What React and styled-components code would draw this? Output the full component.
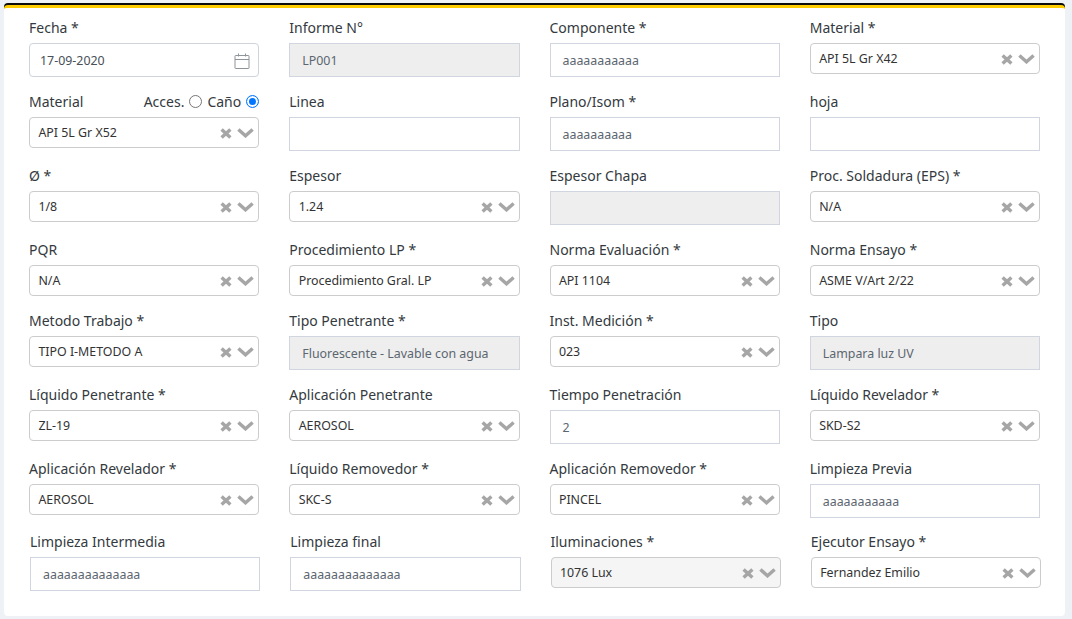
import styled, { createGlobalStyle } from "styled-components";

const GlobalStyle = createGlobalStyle`
  html, body {
    margin: 0;
    background: #eef1f6;
    font-family: "Noto Sans", "Open Sans", sans-serif;
  }
`;

const rows = [
  [
    { label: "Fecha *", type: "date", value: "17-09-2020" },
    { label: "Informe N°", type: "disabled", value: "LP001" },
    { label: "Componente *", type: "input", value: "aaaaaaaaaaa" },
    { label: "Material *", type: "select", value: "API 5L Gr X42" },
  ],
  [
    { label: "Material", type: "select", value: "API 5L Gr X52", radios: true },
    { label: "Linea", type: "input", value: "" },
    { label: "Plano/Isom *", type: "input", value: "aaaaaaaaaa" },
    { label: "hoja", type: "input", value: "" },
  ],
  [
    { label: "Ø *", type: "select", value: "1/8" },
    { label: "Espesor", type: "select", value: "1.24" },
    { label: "Espesor Chapa", type: "disabled", value: "" },
    { label: "Proc. Soldadura (EPS) *", type: "select", value: "N/A" },
  ],
  [
    { label: "PQR", type: "select", value: "N/A" },
    { label: "Procedimiento LP *", type: "select", value: "Procedimiento Gral. LP" },
    { label: "Norma Evaluación *", type: "select", value: "API 1104" },
    { label: "Norma Ensayo *", type: "select", value: "ASME V/Art 2/22" },
  ],
  [
    { label: "Metodo Trabajo *", type: "select", value: "TIPO I-METODO A" },
    { label: "Tipo Penetrante *", type: "disabled", value: "Fluorescente - Lavable con agua" },
    { label: "Inst. Medición *", type: "select", value: "023" },
    { label: "Tipo", type: "disabled", value: "Lampara luz UV" },
  ],
  [
    { label: "Líquido Penetrante *", type: "select", value: "ZL-19" },
    { label: "Aplicación Penetrante", type: "select", value: "AEROSOL" },
    { label: "Tiempo Penetración", type: "input", value: "2" },
    { label: "Líquido Revelador *", type: "select", value: "SKD-S2" },
  ],
  [
    { label: "Aplicación Revelador *", type: "select", value: "AEROSOL" },
    { label: "Líquido Removedor *", type: "select", value: "SKC-S" },
    { label: "Aplicación Removedor *", type: "select", value: "PINCEL" },
    { label: "Limpieza Previa", type: "input", value: "aaaaaaaaaaa" },
  ],
  [
    { label: "Limpieza Intermedia", type: "input", value: "aaaaaaaaaaaaaa" },
    { label: "Limpieza final", type: "input", value: "aaaaaaaaaaaaaa" },
    { label: "Iluminaciones *", type: "select", value: "1076 Lux", muted: true },
    { label: "Ejecutor Ensayo *", type: "select", value: "Fernandez Emilio" },
  ],
];

function CalendarIcon() {
  return (
    <svg width="16" height="16" viewBox="0 0 16 16" fill="none" stroke="#8f9499" strokeWidth="1">
      <rect x="1" y="2.5" width="14" height="13" rx="0.5" />
      <path d="M1 6.5h14M4.5 0.5v3M11.5 0.5v3" />
    </svg>
  );
}

function SelectIcons() {
  return (
    <Icons>
      <svg width="12" height="11" viewBox="0 0 12 11" fill="none" stroke="#a6a6a6" strokeWidth="3.4">
        <path d="M1.6 1.5l8.8 8M10.4 1.5l-8.8 8" />
      </svg>
      <svg width="17" height="10" viewBox="0 0 17 10" fill="none" stroke="#a6a6a6" strokeWidth="3.4">
        <path d="M1.4 1.4l7.1 6.4 7.1-6.4" />
      </svg>
    </Icons>
  );
}

function Control({ field }) {
  if (field.type === "select") {
    return (
      <Select $muted={field.muted}>
        <span>{field.value}</span>
        <SelectIcons />
      </Select>
    );
  }
  if (field.type === "date") {
    return (
      <DateBox>
        <span>{field.value}</span>
        <CalendarIcon />
      </DateBox>
    );
  }
  return <TextBox $disabled={field.type === "disabled"}>{field.value}</TextBox>;
}

export default function App() {
  return (
    <>
      <GlobalStyle />
      <Panel>
        {rows.map((row, i) => (
          <Row key={i} $last={i === rows.length - 1}>
            {row.map((field) => (
              <Field key={field.label}>
                <LabelRow>
                  <Label>{field.label}</Label>
                  {field.radios && (
                    <Radios>
                      Acces.
                      <RadioDot />
                      Caño
                      <RadioDot $checked />
                    </Radios>
                  )}
                </LabelRow>
                <Control field={field} />
              </Field>
            ))}
          </Row>
        ))}
      </Panel>
    </>
  );
}

const Panel = styled.div`
  box-sizing: border-box;
  width: 1061px;
  height: 611px;
  margin: 5px 0 0 4px;
  padding: 9px 25px 0;
  background: #fff;
  border-top: 3px solid #ffcc00;
  border-radius: 4px;
  box-shadow: 0 -2px 0 #0b0b0b;
  display: flex;
  flex-direction: column;
  gap: 14px;
`;

const Row = styled.div`
  display: grid;
  grid-template-columns: repeat(4, 1fr);
  column-gap: 30px;
  width: 1011px;
  align-items: start;
  ${(p) => p.$last && "margin: -1px 0 0 1px;"}
`;

const Field = styled.div`
  display: flex;
  flex-direction: column;
`;

const LabelRow = styled.div`
  display: flex;
  justify-content: space-between;
  align-items: center;
  height: 20px;
  margin-bottom: 6px;
  font-size: 14px;
  color: #343a40;
`;

const Label = styled.label`
  font-weight: 400;
`;

const Radios = styled.div`
  display: flex;
  align-items: center;
  gap: 5px;
`;

const RadioDot = styled.span`
  box-sizing: border-box;
  width: 13px;
  height: 13px;
  border-radius: 50%;
  background: #fff;
  border: ${(p) => (p.$checked ? "1px solid #0075ff" : "1px solid #767676")};
  box-shadow: ${(p) => (p.$checked ? "inset 0 0 0 2px #fff, inset 0 0 0 7px #0075ff" : "none")};
`;

const Select = styled.div`
  box-sizing: border-box;
  height: 31px;
  display: flex;
  align-items: center;
  justify-content: space-between;
  padding: 0 0 0 8.4px;
  border: 1px solid #ccc;
  border-radius: 4px;
  background: ${(p) => (p.$muted ? "#f5f5f5" : "#fff")};
  font-size: 12.4px;
  color: #333;
`;

const Icons = styled.div`
  display: flex;
  align-items: center;
  gap: 5px;
  padding: 1px 4px 0 0;
`;

const DateBox = styled.div`
  box-sizing: border-box;
  height: 34px;
  display: flex;
  align-items: center;
  justify-content: space-between;
  padding: 1px 8px 0 10px;
  border: 1px solid #ced4da;
  border-radius: 4px;
  font-size: 12.4px;
  color: #495057;
`;

const TextBox = styled.div`
  box-sizing: border-box;
  height: 34px;
  display: flex;
  align-items: center;
  padding: 1px 12px 0;
  border: 1px solid #d1d5e0;
  background: ${(p) => (p.$disabled ? "#eeeeee" : "#fff")};
  font-size: 12.4px;
  color: #5c6670;
`;
